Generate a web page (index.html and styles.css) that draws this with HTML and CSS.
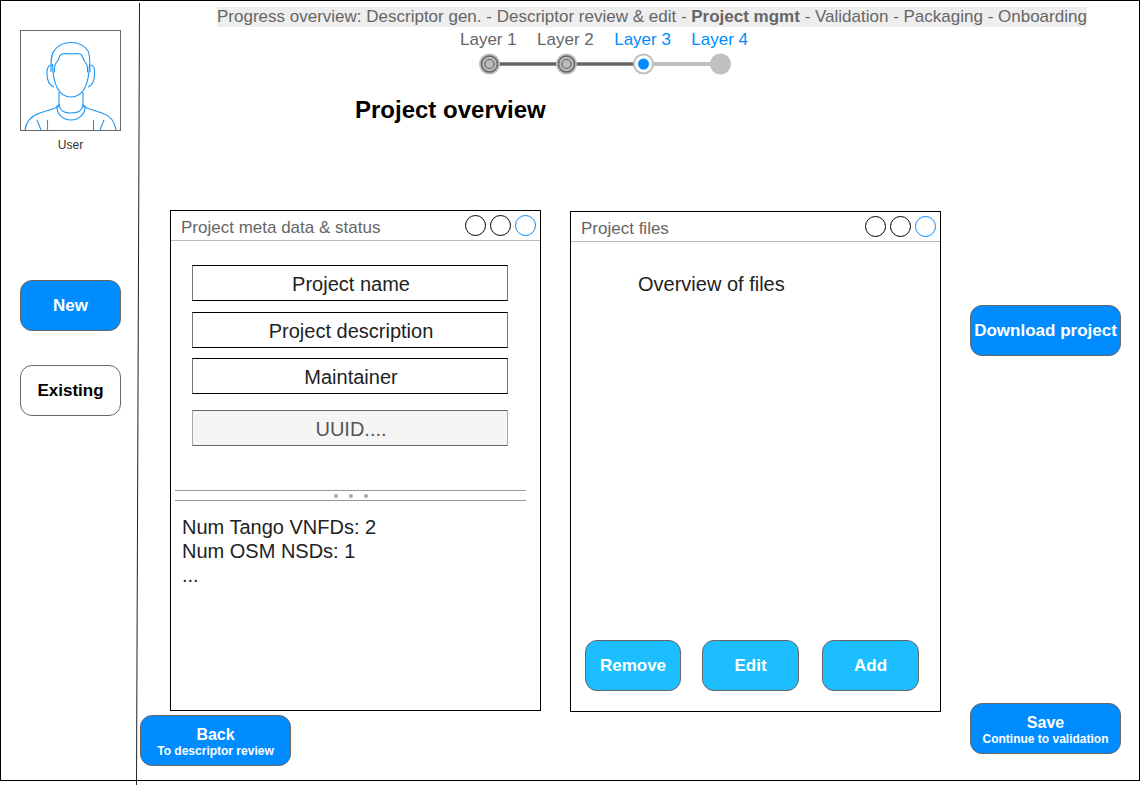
FILE: index.html
```html
<!DOCTYPE html>
<html lang="en">
  <head>
    <meta charset="UTF-8" />
    <title>Project overview</title>
    <link rel="stylesheet" href="styles.css">
  </head>
  <body>
    <div class="frame">
      <!-- slanted divider between sidebar and content -->
      <svg class="divider" width="6" height="785" viewBox="0 0 6 785">
        <path d="M4.500 2 L1.500 785" stroke="#222" stroke-width="1" fill="none" />
      </svg>

      <aside class="sidebar">
        <div class="avatar">
          <svg width="99" height="99" viewBox="21 31 99 99" fill="none" stroke="#1b95f5" stroke-width="1.1">
            <path d="M51 72 C51 62 51 54 54 51 C58 45 65 42.500 71 42.500 C77 42.500 84 45 88 51 C90 54 90 62 90 72" />
            <path d="M54.500 72.500 L54.500 67 C55 62 58 62 59 58 C60 54 62 53.500 66 53.500 C69 54 73 54 76 53.500 C80 53.500 82 54 83 58 C84 62 87 62 87.500 67 L87.500 72.500" />
            <path d="M52.500 64 C53 80 57 97 71 97 C85 97 89 80 89.500 64" />
            <path d="M51 65 C47 66 47 70 47 74 C47 80 49 85 54 87" />
            <path d="M91 65 C95 66 94.500 70 94.500 74 C94.500 80 93 85 88 87" />
            <path d="M59 92 L59 104 C59 107 58 107 54 108.500 L40 113 C31 116 26 122 25 130" />
            <path d="M83 92 L83 104 C83 107 84 107 88 108.500 L102 113 C111 116 115 122 116 130" />
            <path d="M57 105 C56 114 63 120 71 120 C79 120 86 114 85 105" />
            <path d="M59 104 C60 112 65 113 71 113 C77 113 82 112 83 104" />
            <path d="M37 120 L41 130 M47.500 120 L47.500 130 M104 120 L100 130 M93.500 120 L93.500 130" />
          </svg>
        </div>
        <div class="avatar-label">User</div>
        <button class="btn btn-blue side-btn">New</button>
        <button class="btn btn-white side-btn">Existing</button>
      </aside>

      <main class="content">
        <header class="progress-head">
          <p class="progress-text">Progress overview: Descriptor gen. - Descriptor review &amp; edit - <b>Project mgmt</b> - Validation - Packaging - Onboarding</p>
          <div class="layers">
            <span>Layer 1</span>
            <span>Layer 2</span>
            <span class="layer-todo">Layer 3</span>
            <span class="layer-todo">Layer 4</span>
          </div>
          <svg class="stepper" width="254" height="24" viewBox="0 0 254 24">
            <path d="M12 12 H166" stroke="#666" stroke-width="3.500" />
            <path d="M166 12 H243" stroke="#c0c0c0" stroke-width="4" />
            <circle cx="12.500" cy="12" r="10.500" fill="#bbb" />
            <circle cx="12.500" cy="12" r="8" fill="none" stroke="#666" stroke-width="1.500" />
            <circle cx="12.500" cy="12" r="4.500" fill="none" stroke="#666" stroke-width="1.200" />
            <circle cx="89.500" cy="12" r="10.500" fill="#bbb" />
            <circle cx="89.500" cy="12" r="8" fill="none" stroke="#666" stroke-width="1.500" />
            <circle cx="89.500" cy="12" r="4.500" fill="none" stroke="#666" stroke-width="1.200" />
            <circle cx="166.500" cy="12" r="10.500" fill="#c0c0c0" />
            <circle cx="166.500" cy="12" r="8.500" fill="#fff" />
            <circle cx="166.500" cy="12" r="5.500" fill="#008cff" />
            <circle cx="243.500" cy="12" r="10.500" fill="#c0c0c0" />
          </svg>
        </header>

        <h1 class="page-title">Project overview</h1>

        <div class="workspace">
          <section class="panel">
            <div class="panel-bar">
              <span class="panel-title">Project meta data &amp; status</span>
              <span class="dots"><i></i><i></i><i class="dot-blue"></i></span>
            </div>
            <div class="fields">
              <div class="field">Project name</div>
              <div class="field">Project description</div>
              <div class="field field-tight">Maintainer</div>
              <div class="field field-off">UUID....</div>
            </div>
            <div class="splitter"><i></i><i></i><i></i></div>
            <div class="stats">
              Num Tango VNFDs: 2<br />
              Num OSM NSDs: 1<br />
              ...
            </div>
          </section>

          <section class="panel panel-files">
            <div class="panel-bar">
              <span class="panel-title">Project files</span>
              <span class="dots"><i></i><i></i><i class="dot-blue"></i></span>
            </div>
            <div class="files-body">Overview of files</div>
            <div class="file-actions">
              <button class="btn btn-cyan file-btn">Remove</button>
              <button class="btn btn-cyan file-btn">Edit</button>
              <button class="btn btn-cyan file-btn">Add</button>
            </div>
          </section>

          <div class="right-col">
            <button class="btn btn-blue wide-btn">Download project</button>
            <button class="btn btn-blue wide-btn btn-two">Save<small>Continue to validation</small></button>
          </div>
        </div>

        <button class="btn btn-blue wide-btn btn-two back-btn">Back<small>To descriptor review</small></button>
      </main>
    </div>
  </body>
</html>
```

FILE: styles.css
```css
body {
  margin: 0;
  font-family: "Liberation Sans", Arial, sans-serif;
  background: #fff;
  height: 785px;
  overflow: hidden;
}
.frame {
  position: relative;
  display: flex;
  box-sizing: border-box;
  width: 1140px;
  height: 781px;
  border: 1px solid #000;
}
.divider {
  position: absolute;
  left: 134px;
  top: 0;
}

/* sidebar */
.sidebar {
  width: 138px;
  flex-shrink: 0;
  padding: 29px 0 0 19px;
  box-sizing: border-box;
}
.avatar {
  box-sizing: border-box;
  width: 101px;
  height: 101px;
  border: 1px solid #666;
}
.avatar svg {
  display: block;
}
.avatar-label {
  width: 101px;
  margin-top: 7px;
  font-size: 12px;
  line-height: 14px;
  color: #333;
  text-align: center;
}
.side-btn {
  display: block;
  width: 101px;
  height: 51px;
  margin-bottom: 34px;
}
.side-btn:first-of-type {
  margin-top: 128px;
}

/* buttons */
.btn {
  box-sizing: border-box;
  padding: 0;
  border: 1px solid #666;
  border-radius: 12px;
  font-family: inherit;
  font-size: 17px;
  font-weight: bold;
  color: #fff;
}
.btn-two {
  padding-top: 2px;
  font-size: 16px;
}
.btn small {
  display: block;
  font-size: 12px;
  line-height: 14px;
}
.btn-blue {
  background: #008cff;
}
.btn-cyan {
  background: #1cbeff;
}
.btn-white {
  background: #fff;
  color: #000;
}

/* progress */
.content {
  flex: 1;
  min-width: 0;
}
.progress-text {
  display: table;
  margin: 6px 0 0 78px;
  background: #eee;
  color: #666;
  font-size: 17px;
  line-height: 20px;
  white-space: nowrap;
}
.layers {
  display: flex;
  gap: 20.400px;
  margin: 3px 0 0 321px;
  font-size: 17px;
  line-height: 19px;
  color: #666;
}
.layer-todo {
  color: #008cff;
}
.stepper {
  display: block;
  margin: 3px 0 0 338px;
}
.page-title {
  margin: 20px 0 0 216px;
  font-size: 24px;
  line-height: 28px;
  color: #000;
}

/* panels */
.workspace {
  display: flex;
  height: 501px;
  margin: 86px 0 0 31px;
}
.panel {
  box-sizing: border-box;
  width: 371px;
  height: 501px;
  border: 1px solid #000;
}
.panel-files {
  display: flex;
  flex-direction: column;
  margin: 1px 0 0 29px;
}
.panel-bar {
  display: flex;
  justify-content: space-between;
  align-items: center;
  box-sizing: border-box;
  height: 30px;
  padding: 0 4px 0 10px;
  border-bottom: 1px solid #bbb;
}
.panel-title {
  font-size: 17px;
  color: #666;
  padding-top: 5px;
}
.dots {
  display: flex;
  gap: 4px;
}
.dots i {
  box-sizing: border-box;
  width: 21px;
  height: 21px;
  border: 1px solid #000;
  border-radius: 50%;
}
.dots .dot-blue {
  border-color: #008cff;
}
.fields {
  display: flex;
  flex-direction: column;
  gap: 11px;
  height: 249px;
  padding: 24px 0 0 21px;
  box-sizing: border-box;
}
.field {
  box-sizing: border-box;
  width: 316px;
  height: 36px;
  padding-left: 2px;
  border: 1px solid;
  border-color: #000 #777;
  font-size: 20px;
  line-height: 36px;
  color: #222;
  text-align: center;
}
.field-tight {
  margin-top: -1px;
}
.field-off {
  margin-top: 5px;
  border-color: #666 #aaa;
  background: #f5f5f5;
  color: #555;
}
.splitter {
  display: flex;
  justify-content: center;
  gap: 11px;
  align-items: center;
  box-sizing: border-box;
  width: 351px;
  height: 11px;
  margin-left: 4px;
  border-top: 1px solid #999;
  border-bottom: 1px solid #999;
}
.splitter i {
  width: 4px;
  height: 4px;
  border-radius: 50%;
  background: #aaa;
}
.stats {
  margin: 14px 0 0 11px;
  font-size: 20px;
  line-height: 24px;
  color: #222;
}
.files-body {
  flex: 1;
  padding: 30px 0 0 67px;
  font-size: 20px;
  line-height: 24px;
  color: #222;
}
.file-actions {
  display: flex;
  gap: 21px;
  padding: 0 0 20px 14px;
}
.file-btn {
  width: 97px;
  height: 51px;
}
.file-actions .file-btn:first-child {
  width: 96px;
}
.file-actions .file-btn:last-child {
  margin-left: 2px;
}

/* right column and back */
.right-col {
  display: flex;
  flex-direction: column;
  justify-content: space-between;
  box-sizing: border-box;
  height: 544px;
  margin-left: 29px;
  padding-top: 95px;
}
.wide-btn {
  display: block;
  width: 151px;
  height: 51px;
  line-height: 19px;
}
.back-btn {
  margin: 4px 0 0 1px;
}
```
